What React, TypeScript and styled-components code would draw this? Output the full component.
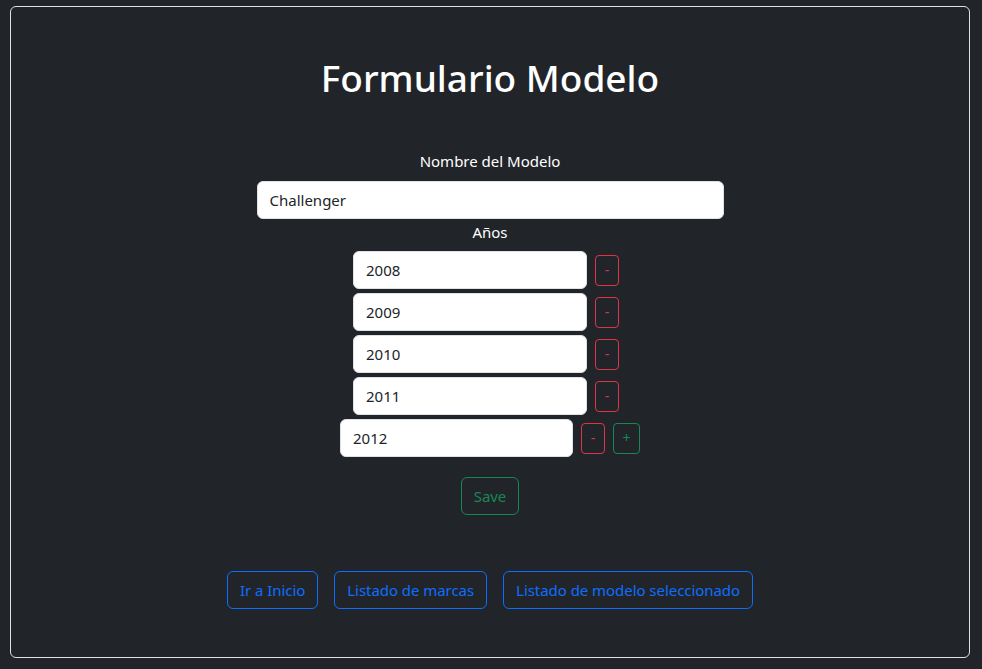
import React from "react";
import styled, { createGlobalStyle } from "styled-components";

const GlobalStyle = createGlobalStyle`
  html, body {
    margin: 0;
    padding: 0;
    background: #212529;
  }
  body {
    font-family: "Noto Sans", "Open Sans", sans-serif;
    color: #dee2e6;
  }
`;

const Page = styled.div`
  padding: 6px 12px 11px 10px;
`;

const Card = styled.main`
  height: 652px;
  box-sizing: border-box;
  border: 1px solid #dee2e6;
  border-radius: 6px;
  display: flex;
  flex-direction: column;
  align-items: center;
`;

const Title = styled.h1`
  margin: 47px 0 0;
  font-size: 37px;
  font-weight: 500;
  line-height: 48px;
  color: #ffffff;
`;

const Label = styled.label<{ $top?: number; $bottom?: number }>`
  display: block;
  margin-top: ${(p) => p.$top ?? 0}px;
  margin-bottom: ${(p) => p.$bottom ?? 8}px;
  font-size: 15px;
  line-height: 24px;
  color: #ffffff;
`;

const TextInput = styled.input<{ $width: number }>`
  box-sizing: border-box;
  width: ${(p) => p.$width}px;
  height: 38px;
  padding: 0 12px;
  border: 1px solid #dee2e6;
  border-radius: 6px;
  background: #ffffff;
  color: #212529;
  font-family: inherit;
  font-size: 15px;
  outline: none;
`;

const YearList = styled.div`
  display: flex;
  flex-direction: column;
  align-items: center;
  gap: 4px;
`;

const YearRow = styled.div<{ $shift: number }>`
  display: flex;
  align-items: center;
  gap: 8px;
  padding-right: ${(p) => p.$shift}px;
`;

const SmallButton = styled.button<{ $tone: "danger" | "success"; $width: number }>`
  box-sizing: border-box;
  width: ${(p) => p.$width}px;
  height: 31px;
  padding: 0;
  border: 1px solid ${(p) => (p.$tone === "danger" ? "#dc3545" : "#198754")};
  border-radius: 4px;
  background: transparent;
  color: ${(p) => (p.$tone === "danger" ? "#dc3545" : "#198754")};
  font-family: inherit;
  font-size: 14px;
  line-height: 1;
`;

const OutlineButton = styled.button<{ $tone: "primary" | "success" }>`
  box-sizing: border-box;
  height: 38px;
  padding: 0 12px;
  border: 1px solid ${(p) => (p.$tone === "primary" ? "#0d6efd" : "#198754")};
  border-radius: 6px;
  background: transparent;
  color: ${(p) => (p.$tone === "primary" ? "#0d6efd" : "#198754")};
  font-family: inherit;
  font-size: 15px;
  letter-spacing: -0.05px;
  white-space: nowrap;
`;

const SaveWrap = styled.div`
  margin-top: 20px;
`;

const NavRow = styled.nav`
  margin-top: 56px;
  display: flex;
  gap: 16px;
`;

const years = ["2008", "2009", "2010", "2011", "2012"];

export default function App() {
  return (
    <>
      <GlobalStyle />
      <Page>
        <Card>
          <Title>Formulario Modelo</Title>
          <Label $top={47}>Nombre del Modelo</Label>
          <TextInput $width={467} defaultValue="Challenger" />
          <Label $top={1} $bottom={7}>Años</Label>
          <YearList>
            {years.map((y, i) => {
              const last = i === years.length - 1;
              return (
                <YearRow key={y} $shift={last ? 0 : 8}>
                  <TextInput $width={last ? 233 : 234} defaultValue={y} />
                  <SmallButton $tone="danger" $width={24}>-</SmallButton>
                  {last && (
                    <SmallButton $tone="success" $width={27}>+</SmallButton>
                  )}
                </YearRow>
              );
            })}
          </YearList>
          <SaveWrap>
            <OutlineButton $tone="success">Save</OutlineButton>
          </SaveWrap>
          <NavRow>
            <OutlineButton $tone="primary">Ir a Inicio</OutlineButton>
            <OutlineButton $tone="primary">Listado de marcas</OutlineButton>
            <OutlineButton $tone="primary">Listado de modelo seleccionado</OutlineButton>
          </NavRow>
        </Card>
      </Page>
    </>
  );
}
